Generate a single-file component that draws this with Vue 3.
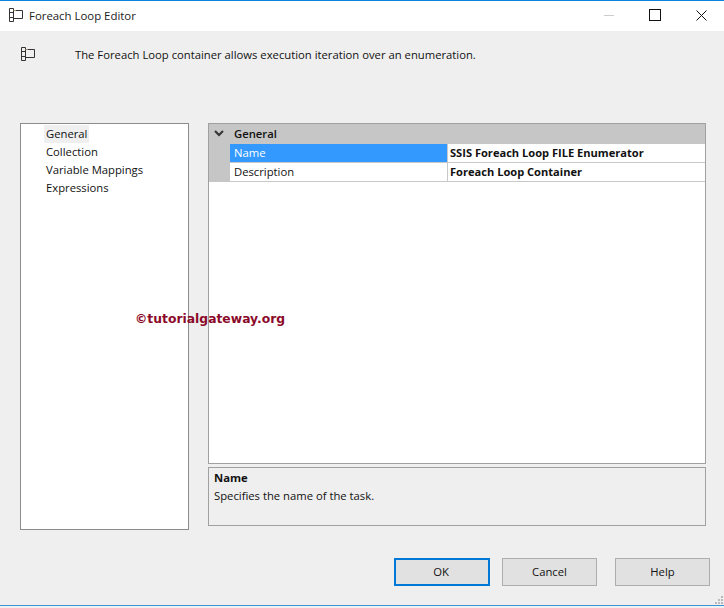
<script setup>
const navItems = ['General', 'Collection', 'Variable Mappings', 'Expressions']
const rows = [
  { name: 'Name', value: 'SSIS Foreach Loop FILE Enumerator', selected: true },
  { name: 'Description', value: 'Foreach Loop Container', selected: false }
]
</script>

<template>
  <div class="window">
    <header class="titlebar">
      <svg class="app-icon" width="14" height="14" viewBox="0 0 14 14">
        <path d="M.5.5h4v13h-4zM.5 4.500h4M.5 9.500h4M6.500 2.500h7v8h-9" fill="none" stroke="#333" />
        <path d="M4.500 2.500h2" fill="none" stroke="#b09a6a" />
      </svg>
      <span class="title">Foreach Loop Editor</span>
      <div class="controls">
        <span class="ctl"><i class="min"></i></span>
        <span class="ctl"><i class="max"></i></span>
        <span class="ctl">
          <svg width="11" height="11" viewBox="0 0 11 11"><path d="M.5.5l10 10M10.500.5l-10 10" stroke="#111" fill="none" /></svg>
        </span>
      </div>
    </header>

    <section class="intro">
      <svg class="app-icon" width="14" height="14" viewBox="0 0 14 14">
        <path d="M.5.5h4v13h-4zM.5 4.500h4M.5 9.500h4M6.500 2.500h7v8h-9" fill="none" stroke="#333" />
        <path d="M4.500 2.500h2" fill="none" stroke="#b09a6a" />
      </svg>
      <p>The Foreach Loop container allows execution iteration over an enumeration.</p>
    </section>

    <main class="body">
      <nav class="nav">
        <div v-for="(item, i) in navItems" :key="item" class="nav-item">
          <span :class="{ current: i === 0 }">{{ item }}</span>
        </div>
      </nav>

      <div class="right">
        <div class="grid">
          <div class="group">
            <svg class="chevron" width="10" height="7" viewBox="0 0 10 7"><path d="M1 1l4 4 4-4" fill="none" stroke="#333" stroke-width="2" /></svg>
            <b>General</b>
          </div>
          <div v-for="row in rows" :key="row.name" class="row">
            <div class="gutter"></div>
            <div class="key" :class="{ selected: row.selected }">{{ row.name }}</div>
            <div class="val">{{ row.value }}</div>
          </div>
        </div>
        <div class="help">
          <b>Name</b>
          <span>Specifies the name of the task.</span>
        </div>
      </div>
    </main>

    <footer class="footer">
      <button class="btn primary">OK</button>
      <button class="btn cancel">Cancel</button>
      <button class="btn help-btn">Help</button>
    </footer>

    <div class="bottom-line"></div>
    <svg class="grip" width="9" height="9" viewBox="0 0 9 9">
      <path d="M6 0h2v2H6zM3 3h2v2H3zM6 3h2v2H6zM0 6h2v2H0zM3 6h2v2H3zM6 6h2v2H6z" fill="#bbb" />
    </svg>
    <div class="watermark">©tutorialgateway.org</div>
  </div>
</template>

<style>
html, body { margin: 0; background: #efefef; }
</style>

<style scoped>
.window {
  position: relative;
  width: 724px;
  height: 608px;
  overflow: hidden;
  background: #efefef;
  color: #111;
  font-family: "Open Sans", "Liberation Sans", sans-serif;
  font-size: 11.28px;
  display: flex;
  flex-direction: column;
  box-sizing: border-box;
}
.titlebar {
  height: 31px;
  flex: none;
  background: #fff;
  border-top: 1px solid #0a84e0;
  display: flex;
  align-items: center;
  padding-left: 9px;
  padding-bottom: 3px;
  box-sizing: border-box;
}
.title { margin-left: 6px; color: #222; font-size: 11.4px; padding-top: 2px; }
.controls { margin-left: auto; display: flex; padding-top: 1px; }
.ctl { width: 46px; display: flex; align-items: center; justify-content: center; }
.min { width: 10px; height: 1px; background: #ccc; display: block; }
.max { width: 10px; height: 10px; border: 1px solid #111; display: block; }
.intro {
  height: 92px;
  flex: none;
  display: flex;
  align-items: flex-start;
  padding: 16px 0 0 21px;
  box-sizing: border-box;
}
.intro p { margin: 0 0 0 40px; }
.body {
  display: flex;
  align-items: flex-start;
  padding-left: 20px;
  flex: none;
}
.nav {
  width: 169px;
  height: 407px;
  box-sizing: border-box;
  border: 1px solid #8a8d90;
  background: #fff;
  padding-top: 1px;
}
.nav-item { height: 18px; line-height: 18px; padding-left: 25px; }
.current { background: #efefef; padding: 0 2px; margin-left: -2px; display: inline-block; height: 18px; }
.right { margin-left: 19px; width: 498px; display: flex; flex-direction: column; gap: 3px; }
.grid {
  height: 341px;
  box-sizing: border-box;
  border: 1px solid #a0a0a0;
  background: #fff;
}
.group {
  height: 20px;
  background: #c6c6c6;
  display: flex;
  align-items: center;
  padding-bottom: 2px;
  box-sizing: border-box;
}
.chevron { margin-left: 5px; }
.group b { margin-left: 10px; font-weight: 600; }
.row { display: flex; height: 19px; box-sizing: border-box; }
.gutter { width: 21px; background: #c6c6c6; flex: none; }
.key {
  width: 218px;
  flex: none;
  box-sizing: border-box;
  padding-left: 4px;
  line-height: 17px;
  border-bottom: 1px solid #c8c8c8;
  border-right: 1px solid #c8c8c8;
}
.key.selected { background: #3399ff; color: #fff; }
.val {
  flex: 1;
  padding-left: 2px;
  font-weight: 700;
  font-size: 11.1px;
  line-height: 17px;
  border-bottom: 1px solid #c8c8c8;
}
.help {
  height: 59px;
  box-sizing: border-box;
  border: 1px solid #a0a0a0;
  padding: 1px 5px;
  display: flex;
  flex-direction: column;
  line-height: 18px;
}
.help b { font-weight: 700; }
.footer {
  display: flex;
  padding: 28px 0 0 394px;
  flex: none;
}
.btn {
  width: 95px;
  height: 28px;
  box-sizing: border-box;
  background: #e1e1e1;
  border: 1px solid #adadad;
  font: inherit;
  color: #111;
  padding: 0 0 2px;
}
.primary { width: 96px; border: 2px solid #0078d7; padding-right: 2px; }
.cancel { margin-left: 12px; }
.help-btn { margin-left: 18px; }
.bottom-line {
  position: absolute;
  left: 0;
  right: 0;
  bottom: 2px;
  height: 1px;
  background: #3d94d6;
}
.grip { position: absolute; right: 0; bottom: 3px; }
.watermark {
  position: absolute;
  left: 135px;
  top: 312px;
  color: #8b0a2a;
  font-family: "DejaVu Sans", sans-serif;
  font-weight: 700;
  font-size: 12.35px;
  white-space: nowrap;
}
</style>
